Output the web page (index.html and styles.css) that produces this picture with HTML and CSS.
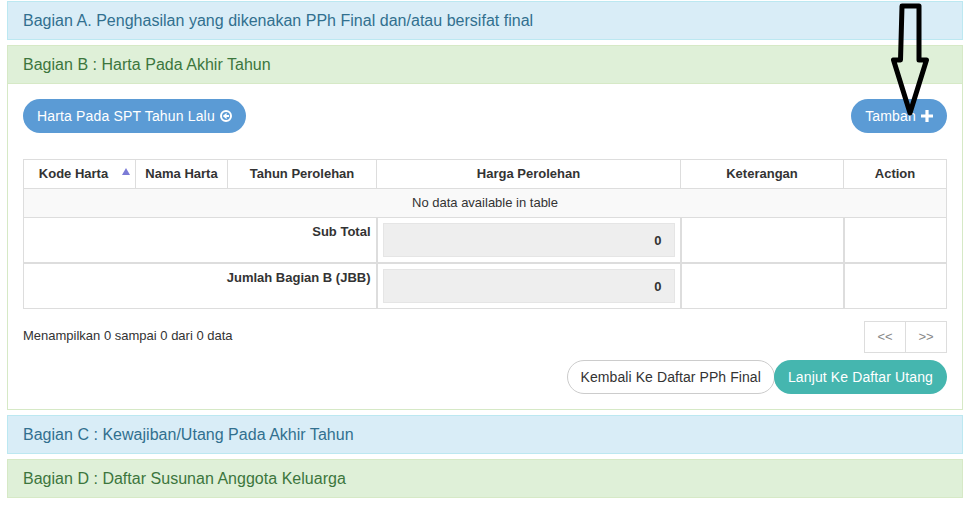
FILE: index.html
```html
<!DOCTYPE html>
<html lang="id">

<head>
    <meta charset="UTF-8">
    <meta name="viewport" content="width=device-width, initial-scale=1.0">
    <title>Bagian B - Harta</title>
    <link rel="stylesheet" href="styles.css">
</head>

<body>
    <div class="panel panel-info">
        <div class="panel-heading">Bagian A. Penghasilan yang dikenakan PPh Final dan/atau bersifat final</div>
    </div>

    <div class="panel panel-success">
        <div class="panel-heading">Bagian B : Harta Pada Akhir Tahun</div>
        <div class="panel-body">
            <div class="toolbar">
                <button class="btn btn-primary">Harta Pada SPT Tahun Lalu
                    <svg class="icon" viewBox="0 0 12 12">
                        <circle cx="6" cy="6" r="5" fill="none" stroke="#fff" stroke-width="2" />
                        <path d="M9 5H6.6V2.8L2.8 6l3.8 3.2V7H9z" fill="#fff" />
                    </svg>
                </button>
                <button class="btn btn-primary">Tambah
                    <svg class="icon" viewBox="0 0 12 12">
                        <path d="M4.4 0h3.2v4.4H12v3.2H7.6V12H4.4V7.6H0V4.4h4.4z" fill="#fff" />
                    </svg>
                </button>
            </div>

            <table>
                <colgroup>
                    <col class="col-kode">
                    <col class="col-nama">
                    <col class="col-tahun">
                    <col class="col-harga">
                    <col class="col-ket">
                    <col class="col-action">
                </colgroup>
                <thead>
                    <tr>
                        <th class="sorted">Kode Harta <span class="sort-up"></span></th>
                        <th>Nama Harta</th>
                        <th>Tahun Perolehan</th>
                        <th>Harga Perolehan</th>
                        <th>Keterangan</th>
                        <th>Action</th>
                    </tr>
                </thead>
                <tbody>
                    <tr class="empty">
                        <td colspan="6">No data available in table</td>
                    </tr>
                </tbody>
                <tfoot>
                    <tr>
                        <th colspan="3" class="label">Sub Total</th>
                        <td class="amount"><input type="text" value="0" readonly></td>
                        <td></td>
                        <td></td>
                    </tr>
                    <tr>
                        <th colspan="3" class="label">Jumlah Bagian B (JBB)</th>
                        <td class="amount"><input type="text" value="0" readonly></td>
                        <td></td>
                        <td></td>
                    </tr>
                </tfoot>
            </table>

            <div class="table-info">
                <div class="info-text">Menampilkan 0 sampai 0 dari 0 data</div>
                <div class="pager">
                    <a>&lt;&lt;</a>
                    <a>&gt;&gt;</a>
                </div>
            </div>

            <div class="actions">
                <button class="btn btn-default">Kembali Ke Daftar PPh Final</button>
                <button class="btn btn-next">Lanjut Ke Daftar Utang</button>
            </div>
        </div>
    </div>

    <div class="panel panel-info">
        <div class="panel-heading">Bagian C : Kewajiban/Utang Pada Akhir Tahun</div>
    </div>

    <div class="panel panel-success">
        <div class="panel-heading">Bagian D : Daftar Susunan Anggota Keluarga</div>
    </div>

    <!-- panah penunjuk ke tombol tambah -->
    <svg class="arrow" width="50" height="118" viewBox="0 0 50 118">
        <path d="M13 6H30V60H37.5L21 113 4.5 60H11.5z" fill="none" stroke="#000" stroke-width="5" stroke-linejoin="round" />
    </svg>
</body>

</html>
```

FILE: styles.css
```css
body {
    font-family: 'Liberation Sans', Arial, sans-serif;
    font-size: 13px;
    color: #333;
    background-color: #fff;
    margin: 0;
    padding: 1px 4px 0 7px;
    position: relative;
}

.panel {
    border: 1px solid;
    margin-bottom: 5px;
    background: #fff;
}

.panel-heading {
    font-size: 16px;
    line-height: 18px;
    letter-spacing: 0.02px;
    padding: 10px 15px 9px;
}

.panel-info {
    border-color: #bce8f1;
}

.panel-info .panel-heading {
    background-color: #d9edf7;
    color: #31708f;
}

.panel-success {
    border-color: #d6e9c6;
}

.panel-success .panel-heading {
    background-color: #dff0d8;
    color: #3c763d;
}

.panel-body {
    padding: 15px;
    border-top: 1px solid #d6e9c6;
}

.toolbar {
    display: flex;
    justify-content: space-between;
    margin-bottom: 26px;
}

.btn {
    font-family: inherit;
    font-size: 14px;
    letter-spacing: 0.08px;
    height: 34px;
    line-height: 20px;
    padding: 0 13px;
    border: 1px solid transparent;
    border-radius: 17px;
    white-space: nowrap;
    cursor: pointer;
}

.btn-primary {
    background-color: #5b9bd5;
    color: #fff;
    letter-spacing: 0.16px;
}

.btn-default {
    background-color: #fff;
    border-color: #ccc;
    color: #333;
}

.btn-next {
    background-color: #45b6af;
    color: #fff;
    letter-spacing: 0.12px;
}

.icon {
    width: 12px;
    height: 12px;
    margin-left: 1px;
    vertical-align: -1px;
}

table {
    width: 923px;
    table-layout: fixed;
    border-collapse: collapse;
    border: 1px solid #ddd;
}

.col-kode {
    width: 112px;
}

.col-nama {
    width: 92px;
}

.col-tahun {
    width: 149px;
}

.col-harga {
    width: 304px;
}

.col-ket {
    width: 163px;
}

.col-action {
    width: 103px;
}

th,
td {
    border: 1px solid #ddd;
    padding: 7px 5px;
    line-height: 14px;
    height: 14px;
}

thead th {
    text-align: center;
}

th.sorted {
    position: relative;
    padding-right: 17px;
}

.sort-up {
    position: absolute;
    right: 5px;
    top: 8px;
    width: 0;
    height: 0;
    border-left: 4px solid transparent;
    border-right: 4px solid transparent;
    border-bottom: 7px solid #7b7bd6;
}

.empty td {
    background-color: #f9f9f9;
    text-align: center;
}

tfoot th,
tfoot td {
    vertical-align: top;
}

tfoot tr + tr th,
tfoot tr + tr td {
    border-top-width: 2px;
}

tfoot td {
    border-left-width: 2px;
}

th.label {
    text-align: right;
}

td.amount {
    padding: 5px;
}

.amount input {
    display: block;
    width: 100%;
    height: 34px;
    box-sizing: border-box;
    padding: 6px 12px;
    font-family: inherit;
    font-size: 13px;
    font-weight: bold;
    color: #333;
    text-align: right;
    background-color: #eee;
    border: 1px solid #e5e5e5;
    outline: none;
}

.table-info {
    display: flex;
    justify-content: space-between;
    margin-top: 12px;
}

.info-text {
    padding-top: 7px;
}

.pager {
    display: flex;
}

.pager a {
    width: 40px;
    height: 30px;
    line-height: 30px;
    text-align: center;
    color: #888;
    border: 1px solid #ddd;
}

.pager a + a {
    border-left: 0;
}

.actions {
    display: flex;
    justify-content: flex-end;
    margin-top: 7px;
}

.actions .btn-next {
    margin-left: -1px;
}

/* panah di atas halaman */
.arrow {
    position: absolute;
    left: 889px;
    top: 0;
}
```
